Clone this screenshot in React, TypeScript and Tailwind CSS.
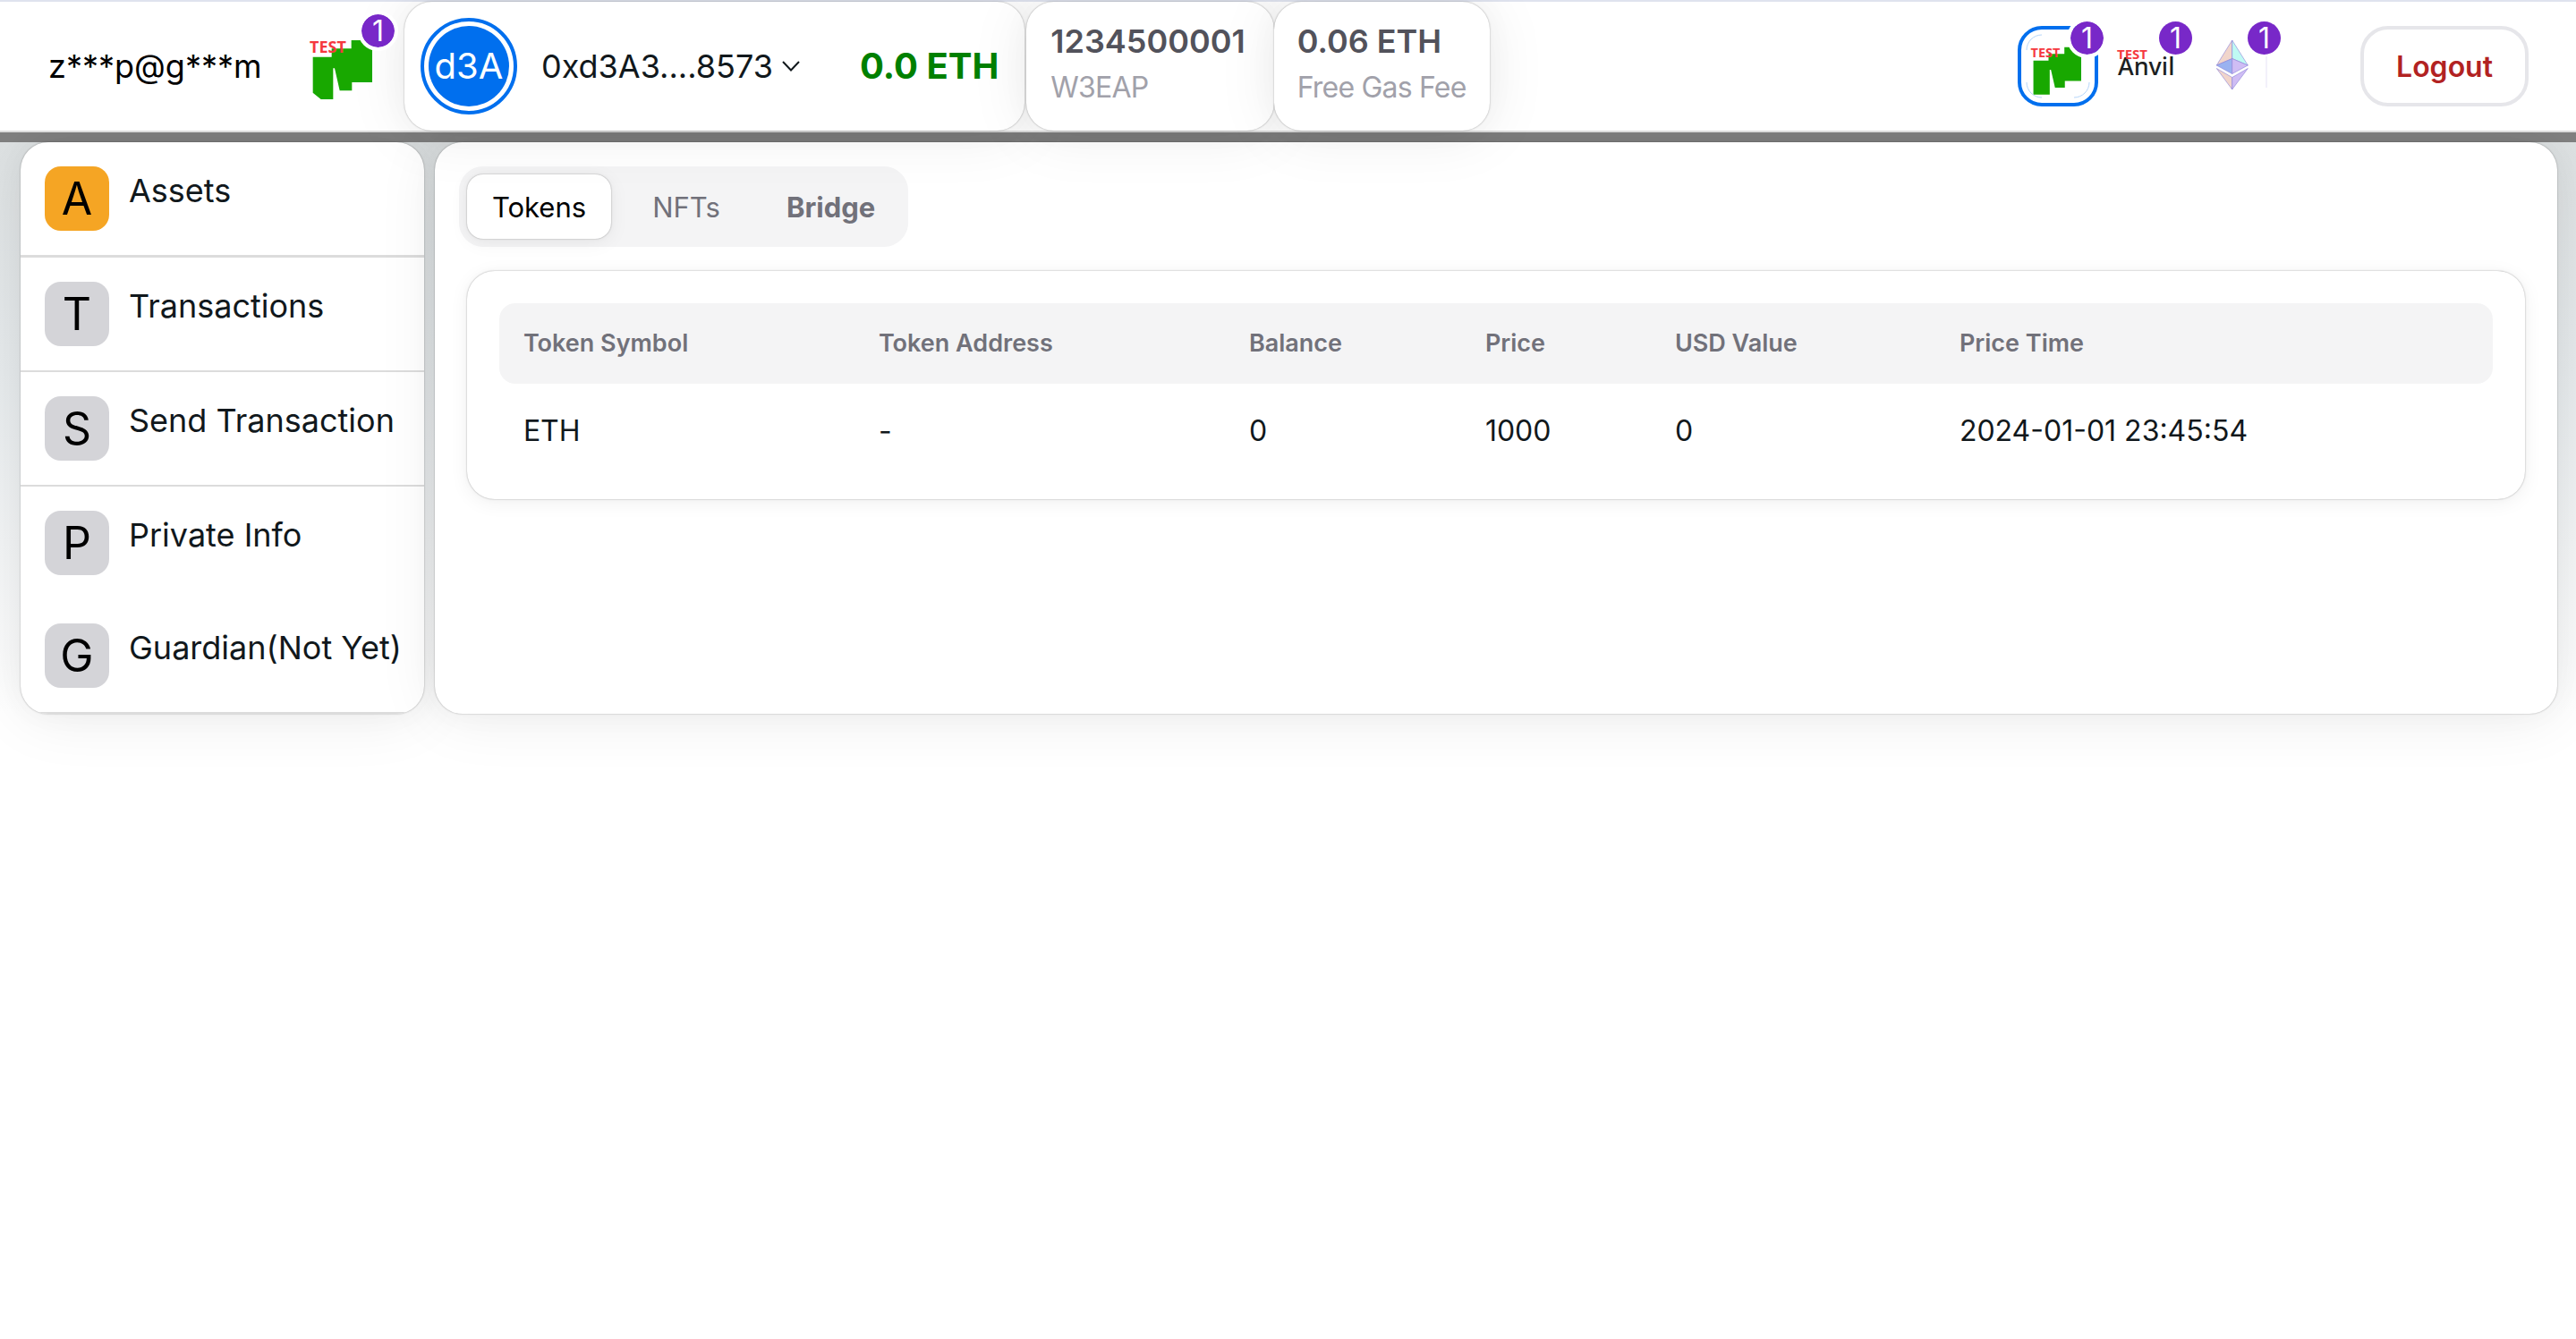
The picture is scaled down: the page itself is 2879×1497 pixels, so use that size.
import React, { useState } from "react";

const cardShadow =
  "shadow-[0_0_34px_rgb(0_0_0/0.03),0_4px_68px_rgb(0_0_0/0.08),0_0_2px_rgb(0_0_0/0.35)]";
const smallShadow =
  "shadow-[0_0_12px_rgb(0_0_0/0.02),0_4px_22px_rgb(0_0_0/0.06),0_0_2px_rgb(0_0_0/0.35)]";

function TestMark({ x, y, size }: { x: number; y: number; size: number }) {
  return (
    <text
      x={x}
      y={y}
      fontFamily='"Noto Sans", "Open Sans", sans-serif'
      fontWeight={700}
      fontSize={size}
      fill="#f5393f"
    >
      TEST
    </text>
  );
}

function NephLogo({ clipped }: { clipped?: boolean }) {
  return (
    <svg viewBox="0 -15 216 216" className="h-full w-full overflow-visible" aria-label="Testnet">
      <path
        d={
          clipped
            ? "M17 62H80V34H146V6H178L216 38V147H148V175H107L90 100H85V204H44L17 182Z"
            : "M17 62H80V34H146V6H178L216 38V147H148V175H107L90 100H85V204H17Z"
        }
        fill="#18a800"
      />
      <TestMark x={6} y={47} size={54} />
    </svg>
  );
}

function AnvilLogo() {
  return (
    <svg viewBox="0 0 90 90" className="size-full" aria-label="Anvil">
      <text
        x="13"
        y="55"
        fontFamily='"Noto Sans", "Open Sans", sans-serif'
        fontWeight={500}
        fontSize="27"
        fill="#1c1f22"
      >
        Anvil
      </text>
      <TestMark x={12} y={37} size={15} />
    </svg>
  );
}

function EthLogo() {
  return (
    <svg viewBox="0 0 90 90" className="size-full" aria-label="Ethereum">
      <g stroke="#8a7fd6" strokeWidth="0.6" strokeLinejoin="round">
        <path d="M41.7 16L24.3 44L41.7 36.500Z" fill="#f1d5cb" />
        <path d="M41.7 16L59.3 44L41.7 36.500Z" fill="#bffaf4" />
        <path d="M24.3 44L41.7 36.500V53.500Z" fill="#9ab2f0" />
        <path d="M59.3 44L41.7 36.500V53.500Z" fill="#cfbdf4" />
        <path d="M24.300 47.500L41.700 57.500V71Z" fill="#f1d5cb" />
        <path d="M59.300 47.500L41.700 57.500V71Z" fill="#cfbdf4" />
      </g>
      <path d="M80 34V69" stroke="#e6e3f6" strokeWidth="1" />
    </svg>
  );
}

function Badge({ ring }: { ring?: boolean }) {
  return (
    <span
      className={
        "flex size-[45px] items-center justify-center rounded-full border-4 bg-[#7828c8] bg-clip-padding text-[32px] leading-none text-white " +
        (ring ? "border-white" : "border-transparent")
      }
    >
      1
    </span>
  );
}

function Network({
  name,
  selected,
  onSelect,
  children,
}: {
  name: string;
  selected: boolean;
  onSelect: () => void;
  children: React.ReactNode;
}) {
  return (
    <button
      type="button"
      aria-label={name}
      aria-pressed={selected}
      onClick={onSelect}
      className="relative size-[90px]"
    >
      {children}
      <span className="absolute -top-[9px] -right-[10px]">
        <Badge ring={selected} />
      </span>
    </button>
  );
}

function Header() {
  const [network, setNetwork] = useState(0);
  return (
    <header className="relative z-10 flex h-[148px] items-center border-y-2 border-t-[#dfe3ee] border-b-[#dcdcdc] bg-white">
      <span className="ml-[54px] w-[290px] text-[36px] leading-[54px] text-black">z***p@g***m</span>
      <span className="relative size-[72px]">
        <NephLogo clipped />
        <span className="absolute -top-[26px] -right-[29px]">
          <Badge ring />
        </span>
      </span>

      <section className={"ml-9 flex h-full items-center rounded-[31px] bg-white pr-[29px] pl-[18px] " + cardShadow}>
        <span className="flex size-[108px] items-center justify-center rounded-full border-4 border-[#006fee] p-[5px]">
          <span className="flex size-full items-center justify-center rounded-full bg-[#006fee] text-[40px] leading-none text-white">
            d3A
          </span>
        </span>
        <button
          type="button"
          aria-haspopup="menu"
          className="ml-[27px] flex items-center gap-2.5 text-[36px] leading-[54px] text-[#11181c]"
        >
          0xd3A3....8573
          <svg viewBox="0 0 20 12" className="h-3 w-5" fill="none" stroke="#11181c" strokeWidth="2">
            <path d="M1 1L10 10.500L19 1" />
          </svg>
        </button>
        <strong className="ml-[67px] text-[40px] leading-[54px] font-bold text-[#008000]">0.0 ETH</strong>
      </section>

      <section className={"ml-0.5 h-full rounded-[31px] bg-white pt-[17px] pr-[32px] pl-[27px] " + cardShadow}>
        <h4 className="text-[36px] leading-[54px] font-semibold text-[#52525b]">1234500001</h4>
        <p className="text-[32px] leading-[50px] tracking-tight text-[#a1a1aa]">W3EAP</p>
      </section>
      <section className={"h-full rounded-[31px] bg-white px-[26px] pt-[17px] " + cardShadow}>
        <h4 className="text-[36px] leading-[54px] font-semibold text-[#52525b]">0.06 ETH</h4>
        <p className="text-[32px] leading-[50px] tracking-tight text-[#a1a1aa]">Free Gas Fee</p>
      </section>

      <nav aria-label="Networks" className="ml-auto flex gap-[9px]">
        <Network name="Testnet" selected={network === 0} onSelect={() => setNetwork(0)}>
          <span className="flex size-full items-center justify-center rounded-[27px] border-4 border-[#006fee] p-[5px]">
            <svg viewBox="0 0 72 72" className="absolute size-[72px]" fill="none" stroke="#b5d6fa">
              <path d="M1 18A17 17 0 0 1 18 1M1 54A17 17 0 0 0 18 71M54 71A17 17 0 0 0 71 54" />
            </svg>
            <span className="mt-1 mr-1.5 size-[58px]">
              <NephLogo />
            </span>
          </span>
        </Network>
        <Network name="Anvil" selected={network === 1} onSelect={() => setNetwork(1)}>
          <AnvilLogo />
        </Network>
        <Network name="Ethereum" selected={network === 2} onSelect={() => setNetwork(2)}>
          <EthLogo />
        </Network>
      </nav>
      <button
        type="button"
        className="mr-[53px] ml-[95px] h-[90px] rounded-[31px] border-4 border-[#e6e6ea] px-9 text-[32px] leading-[45px] font-semibold text-[#b22222]"
      >
        Logout
      </button>
    </header>
  );
}

const menu = [
  { label: "Assets", line: "border-b-3" },
  { label: "Transactions", line: "border-b-2" },
  { label: "Send Transaction", line: "border-b-2" },
  { label: "Private Info", line: "" },
  { label: "Guardian(Not Yet)", line: "border-b-2" },
];

function Sidebar() {
  const [active, setActive] = useState(0);
  return (
    <nav aria-label="Main" className={"shrink-0 overflow-hidden rounded-[31px] bg-white " + cardShadow}>
      {menu.map((item, i) => (
        <button
          key={item.label}
          type="button"
          aria-current={i === active ? "page" : undefined}
          onClick={() => setActive(i)}
          className={"flex w-full gap-[22px] border-[#dcdcdc] py-[27px] pr-[25px] pl-[27px] text-left " + item.line}
        >
          <span
            className={
              "flex size-[72px] items-center justify-center rounded-[18px] text-[50px] leading-none text-black " +
              (i === active ? "bg-[#f5a524]" : "bg-[#d4d4d8]")
            }
          >
            {item.label[0]}
          </span>
          <span className="text-[36px] leading-[54px] text-[#11181c]">{item.label}</span>
        </button>
      ))}
    </nav>
  );
}

const tabs = [
  { label: "Tokens", weight: "font-normal" },
  { label: "NFTs", weight: "font-normal" },
  { label: "Bridge", weight: "font-bold" },
];

const columns = [
  { label: "Token Symbol", width: "w-[397px]" },
  { label: "Token Address", width: "w-[414px]" },
  { label: "Balance", width: "w-[264px]" },
  { label: "Price", width: "w-[212px]" },
  { label: "USD Value", width: "w-[318px]" },
  { label: "Price Time", width: "" },
];

const rows = [["ETH", "-", "0", "1000", "0", "2024-01-01 23:45:54"]];

function Assets() {
  const [tab, setTab] = useState(0);
  return (
    <main className={"min-w-0 flex-1 rounded-[31px] bg-white p-[27px] " + cardShadow}>
      <div role="tablist" className="flex h-[90px] w-fit gap-[18px] rounded-[27px] bg-[#f4f4f5] p-[9px]">
        {tabs.map((t, i) => (
          <button
            key={t.label}
            type="button"
            role="tab"
            aria-selected={i === tab}
            onClick={() => setTab(i)}
            className={
              "rounded-[18px] px-7 text-[31px] leading-[45px] " +
              t.weight +
              (i === tab ? " bg-white text-black " + smallShadow : " text-[#71717a]")
            }
          >
            {t.label}
          </button>
        ))}
      </div>
      <div className={"mx-[9px] mt-[27px] rounded-[31px] bg-white p-9 " + smallShadow}>
        <table className="w-full table-fixed border-separate border-spacing-0 text-left">
          <thead>
            <tr className="h-[90px]">
              {columns.map((c) => (
                <th
                  key={c.label}
                  scope="col"
                  className={
                    "bg-[#f4f4f5] px-[27px] text-[27px] font-semibold text-[#71717a] first:rounded-l-[18px] last:rounded-r-[18px] " +
                    c.width
                  }
                >
                  {c.label}
                </th>
              ))}
            </tr>
          </thead>
          <tbody>
            {rows.map((r) => (
              <tr key={r[0]}>
                {r.map((cell, i) => (
                  <td
                    key={columns[i].label}
                    className="px-[27px] pt-[30px] pb-[18px] text-[32px] leading-[45px] text-[#11181c]"
                  >
                    {cell}
                  </td>
                ))}
              </tr>
            ))}
          </tbody>
        </table>
      </div>
    </main>
  );
}

export default function App() {
  return (
    <div className='min-h-screen bg-white font-["Inter",sans-serif]'>
      <Header />
      <div className="h-[11px] bg-[#808080]" />
      <div className="flex gap-3 bg-linear-to-b from-[#dde1e2] via-[#e7ebed] via-40% to-white pr-[21px] pl-[23px]">
        <Sidebar />
        <Assets />
      </div>
    </div>
  );
}
